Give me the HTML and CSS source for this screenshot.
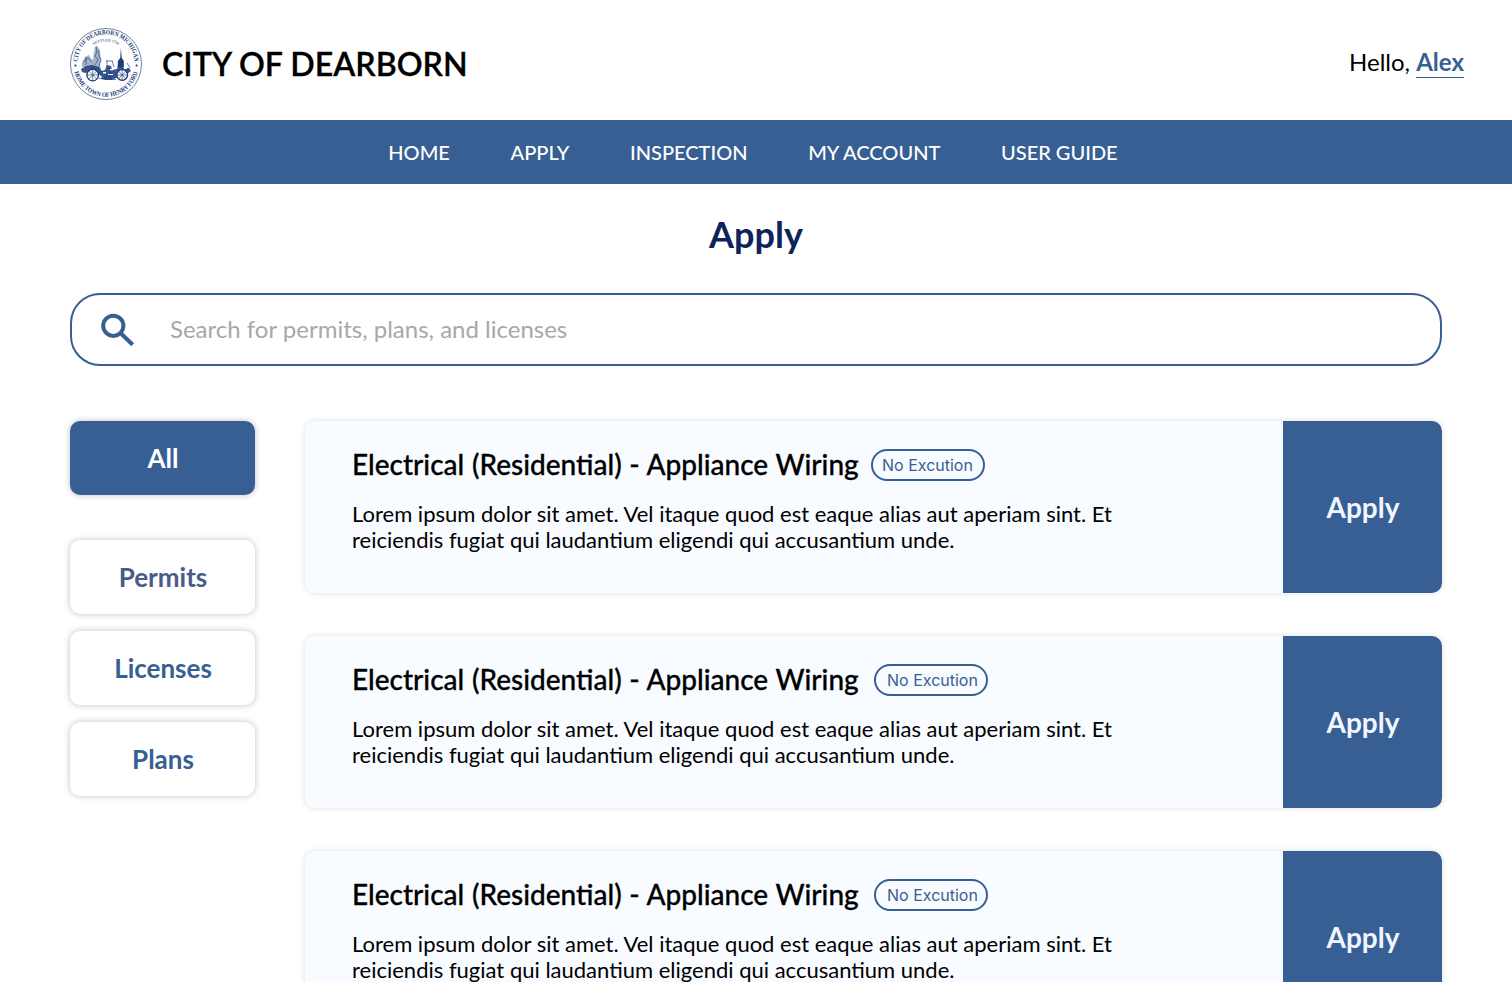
FILE: index.html
```
<!DOCTYPE html>
<html lang="en">
<head>
<meta charset="utf-8">
<title>City of Dearborn - Apply</title>
<link rel="stylesheet" href="styles.css">
</head>
<body>
<header class="header">
  <div class="brand">
    <svg class="seal" viewBox="0 0 72 72" aria-hidden="true">
      <defs>
        <path id="arc-top" d="M7.6 34.800A28.400 28.400 0 0 1 64.400 34.800"/>
        <path id="arc-bottom" d="M4 42.500A32.600 32.600 0 0 0 68 42.500"/>
        <path id="arc-inner" d="M15 27.500A22.700 22.700 0 0 1 57 27.500"/>
      </defs>
      <circle class="seal-line" cx="36" cy="36" r="35.500"/>
      <text class="seal-text"><textPath href="#arc-top" textLength="87" lengthAdjust="spacingAndGlyphs" startOffset="1">CITY OF DEARBORN MICHIGAN</textPath><textPath href="#arc-bottom" textLength="86" lengthAdjust="spacingAndGlyphs" startOffset="1.500">HOME TOWN OF HENRY FORD</textPath><textPath class="seal-small" href="#arc-inner" startOffset="50%" text-anchor="middle">SETTLED 1786</textPath></text>
      <circle class="seal-fill" cx="5.400" cy="37.500" r="1.100"/>
      <circle class="seal-fill" cx="66.600" cy="37.500" r="1.100"/>
      <path class="seal-soft" d="M12 35l3-6 4-2 3 5v7H12z"/>
      <path class="seal-fill" d="M50.300 30l.5-10 1 10 2 3v6h-6v-6z"/>
      <path class="seal-soft" d="M25 19l2-1.500 2 3 1 5 1 5-1 6 1 4-9 1-1-6 2-5z"/>
      <path class="seal-line" d="M26 19l1 5-2 4 3 4-3 5M29 22v6l2 4-2 6M13 34l5-4 4 4M16 29v8"/>
      <path class="seal-fill" d="M11 41l5-3 6-1 7 2 3 4 3-1 2-5 4 1 1 4 5-1 1-4 4 1 2 2 5 0 2 3-4 3-4 0-4 3-8 3H35l-5-5-8-4-7 2-3-1z" opacity=".88"/>
      <g class="seal-wheel">
        <circle class="seal-disc" cx="22.700" cy="47" r="5.800"/>
        <circle class="seal-disc" cx="52.200" cy="47" r="5.400"/>
        <path d="M31 50a4 4 0 0 0 6-3M41 44a4 4 0 0 0 1 7"/>
      </g>
      <path class="seal-line" d="M22.700 41v12M17 47h11.500M18.700 43l8 8M26.700 43l-8 8M52.200 41.500v11M47 47h10.500M48.500 43.300l7.400 7.400M55.900 43.300l-7.400 7.400M28 50l8 1.500h10M37 32v7M42 33l2 6M36 33h7M57 35l3 5"/>
      <path class="seal-paper" d="M33 44h3v1.500h-3zM40 41h3v1.200h-3zM54 40h3v1h-3zM38 46h5v1h-5z"/>
    </svg>
    <span class="brand-name">CITY OF DEARBORN</span>
  </div>
  <div class="greeting">Hello, <a class="user">Alex</a></div>
</header>
<nav class="nav">
  <a>HOME</a><a>APPLY</a><a>INSPECTION</a><a>MY ACCOUNT</a><a>USER GUIDE</a>
</nav>
<main class="main">
  <h1 class="title">Apply</h1>
  <div class="search">
    <svg class="search-icon" viewBox="0 0 34 34" aria-hidden="true"><circle cx="12.300" cy="12.800" r="10.100"/><path d="M19.500 20L31.700 31.700"/></svg>
    <span class="search-hint">Search for permits, plans, and licenses</span>
  </div>
  <div class="content">
    <aside class="filters">
      <a class="filter filter-active">All</a>
      <a class="filter filter-muted">Permits</a>
      <a class="filter">Licenses</a>
      <a class="filter">Plans</a>
    </aside>
    <section class="cards">
      <article class="card">
        <div class="card-body">
          <div class="card-head"><h2>Electrical (Residential) - Appliance Wiring</h2><span class="badge badge-first">No Excution</span></div>
          <p>Lorem ipsum dolor sit amet. Vel itaque quod est eaque alias aut aperiam sint. Et<br>reiciendis fugiat qui laudantium eligendi qui accusantium unde.</p>
        </div>
        <a class="apply">Apply</a>
      </article>
      <article class="card">
        <div class="card-body">
          <div class="card-head"><h2>Electrical (Residential) - Appliance Wiring</h2><span class="badge">No Excution</span></div>
          <p>Lorem ipsum dolor sit amet. Vel itaque quod est eaque alias aut aperiam sint. Et<br>reiciendis fugiat qui laudantium eligendi qui accusantium unde.</p>
        </div>
        <a class="apply">Apply</a>
      </article>
      <article class="card">
        <div class="card-body">
          <div class="card-head"><h2>Electrical (Residential) - Appliance Wiring</h2><span class="badge">No Excution</span></div>
          <p>Lorem ipsum dolor sit amet. Vel itaque quod est eaque alias aut aperiam sint. Et<br>reiciendis fugiat qui laudantium eligendi qui accusantium unde.</p>
        </div>
        <a class="apply">Apply</a>
      </article>
    </section>
  </div>
</main>
</body>
</html>
```
FILE: styles.css
```
* { box-sizing: border-box; }
body {
  margin: 0;
  height: 982px;
  overflow: hidden;
  background: #fff;
  color: #000;
  font-family: Lato, sans-serif;
}
h1, h2, p { margin: 0; }
.header {
  display: flex;
  justify-content: space-between;
  height: 120px;
  padding: 28px 48px 0 70px;
}
.brand { display: flex; height: 72px; align-items: center; gap: 20px; }
.brand-name { padding-bottom: 2px; font-size: 32.15px; font-weight: 600; white-space: nowrap; -webkit-text-stroke: .3px #000; }
.seal { width: 72px; height: 72px; }
.seal-line { fill: none; stroke: #2c4a83; stroke-width: .7; }
.seal-wheel { fill: none; stroke: #1d3b79; stroke-width: 1.3; }
.seal-disc { fill: #fff; }
.seal-fill { fill: #1d3b79; }
.seal-soft { fill: #a3b1cc; }
.seal-paper { fill: #fff; }
.seal-text { fill: #1d3b79; font: bold 6.6px "Liberation Serif", serif; }
.seal-small { fill: #5c73a5; font-size: 3.8px; }
.greeting { padding-top: 19px; font-size: 24px; line-height: 29px; white-space: nowrap; }
.user { display: inline-block; height: 31px; border-bottom: 1px solid #375f93; color: #375f93; font-weight: 700; }
.nav {
  display: flex;
  gap: 60.7px;
  height: 64px;
  padding: 0 0 1px 388.3px;
  align-items: center;
  background: #375f93;
  color: #fff;
  font-size: 20px;
  font-weight: 500;
}
.main { width: 1442px; padding: 28px 0 0 70px; }
.title { height: 81px; color: #0e235c; font-size: 36px; line-height: 44px; font-weight: 700; text-align: center; }
.search {
  display: flex;
  align-items: center;
  gap: 35px;
  height: 73px;
  padding-left: 29px;
  border: 2px solid #375f93;
  border-radius: 30px;
  color: #a8a8a8;
  font-size: 24px;
}
.search-hint { padding-bottom: 2px; }
.search-icon { width: 34px; height: 34px; fill: none; stroke: #375f93; stroke-width: 4; }
.content { display: flex; gap: 50px; margin-top: 55px; }
.filters { display: flex; flex-direction: column; width: 185px; gap: 17px; }
.filter {
  display: flex;
  align-items: center;
  justify-content: center;
  height: 74px;
  padding-left: 1px;
  border-radius: 10px;
  box-shadow: 0 0 6px rgba(0, 0, 0, .25);
  background: #fff;
  color: #375f93;
  font-size: 26px;
  font-weight: 700;
}
.filter-active { margin-bottom: 28px; background: #375f93; color: #fff; }
.filter-muted { color: #4a5b8a; }
.cards { display: flex; flex-direction: column; flex: 1; gap: 43px; }
.card { display: flex; height: 172px; border-radius: 10px; box-shadow: 0 0 6px rgba(0, 0, 0, .13); background: #f8fbff; overflow: hidden; }
.card-body { flex: 1; padding: 27px 0 0 47px; }
.card-head { display: flex; align-items: center; height: 34px; }
.card h2 { width: 507px; padding-bottom: 2px; font-size: 28px; font-weight: 500; word-spacing: .6px; white-space: nowrap; -webkit-text-stroke: .3px #000; }
.card p { margin-top: 19px; font-size: 22px; line-height: 26px; white-space: nowrap; }
.badge {
  display: flex;
  align-items: center;
  width: 114px;
  height: 32px;
  margin-left: 15px;
  padding-left: 11px;
  border: 2px solid #375f93;
  border-radius: 16px;
  color: #375f93;
  font: 400 16px Inter, sans-serif;
  white-space: nowrap;
}
.badge-first { margin-left: 12px; padding-left: 9px; }
.apply {
  display: flex;
  align-items: center;
  justify-content: center;
  width: 159px;
  padding-left: 1px;
  background: #375f93;
  color: #f0f6ff;
  font-size: 28px;
  font-weight: 700;
}
```
